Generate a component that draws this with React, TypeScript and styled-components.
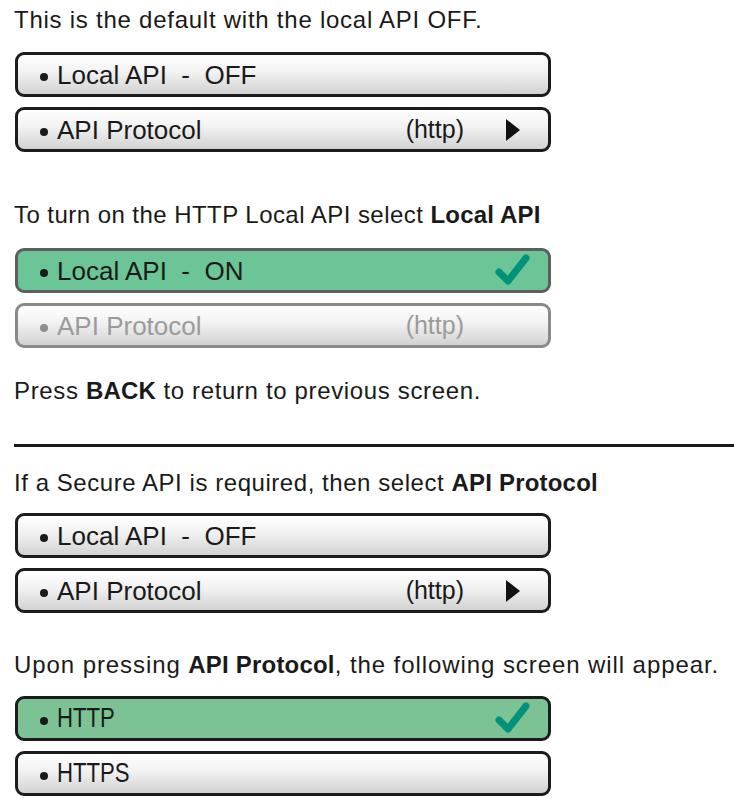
import React from "react";
import styled, { createGlobalStyle, css } from "styled-components";

const Global = createGlobalStyle`
  html, body { margin: 0; padding: 0; background: #ffffff; }
  body { font-family: "Liberation Sans", Arial, sans-serif; color: #1a1a1a; }
`;

const Page = styled.div`
  width: 734px;
  height: 799px;
  overflow: hidden;
  padding: 7px 0 0 14px;
  box-sizing: border-box;
  display: flex;
  flex-direction: column;
`;

const Caption = styled.p<{ $mt?: number; $mb?: number; $ls?: number }>`
  margin: ${(p) => p.$mt ?? 0}px 0 ${(p) => p.$mb ?? 0}px 0;
  font-size: 24px;
  line-height: 26px;
  letter-spacing: ${(p) => p.$ls ?? 0.6}px;
  color: #1a1a1a;
  white-space: nowrap;
  b { font-weight: 700; letter-spacing: 0.2px; }
`;

const Stack = styled.div`
  display: flex;
  flex-direction: column;
  gap: 10px;
  margin-left: 1px;
`;

type Variant = "normal" | "selected" | "selectedDark" | "disabled";

const Box = styled.div<{ $variant: Variant }>`
  box-sizing: border-box;
  width: 536px;
  height: 45px;
  border-radius: 9px;
  border: 3px solid #1c1c1c;
  display: flex;
  align-items: center;
  padding: 0 16px 0 22px;
  background: linear-gradient(180deg, #ffffff 0%, #f1f1f1 45%, #d2d2d2 100%);
  color: #1a1a1a;
  ${(p) =>
    p.$variant === "selected" &&
    css`
      background: #6cc597;
      border-color: #5e5e5e;
    `}
  ${(p) =>
    p.$variant === "selectedDark" &&
    css`
      background: #7cc294;
      border-color: #1c1c1c;
    `}
  ${(p) =>
    p.$variant === "disabled" &&
    css`
      border-color: #8a8a8a;
      color: #9b9b9b;
    `}
`;

const Bullet = styled.span<{ $dim?: boolean }>`
  width: 8px;
  height: 8px;
  border-radius: 50%;
  background: ${(p) => (p.$dim ? "#8e8e8e" : "#1a1a1a")};
  margin: 4px 9px 0 0;
  flex: none;
`;

const Label = styled.span<{ $narrow?: boolean }>`
  font-size: 26px;
  line-height: 1;
  white-space: pre;
  flex: 1;
  ${(p) =>
    p.$narrow &&
    css`
      font-size: 27px;
      display: inline-block;
      transform: scaleX(0.82);
      transform-origin: left center;
    `}
`;

const Value = styled.span`
  font-size: 25px;
  line-height: 1;
  margin-right: 42px;
`;

const Arrow = styled.span<{ $hidden?: boolean }>`
  width: 0;
  height: 0;
  border-top: 11px solid transparent;
  border-bottom: 11px solid transparent;
  border-left: 14px solid #111;
  margin-right: 12px;
  visibility: ${(p) => (p.$hidden ? "hidden" : "visible")};
`;

const Divider = styled.hr`
  border: none;
  height: 3px;
  background: #1a1a1a;
  margin: 40px 0 0 0;
  width: 720px;
`;

const CheckSvg = styled.svg`
  flex: none;
  margin-top: -2px;
`;

const Check = () => (
  <CheckSvg width="38" height="36" viewBox="0 0 38 36">
    <path
      d="M5 20 L14 29 L32 6"
      fill="none"
      stroke="#00927a"
      strokeWidth="7"
      strokeLinecap="round"
      strokeLinejoin="round"
    />
  </CheckSvg>
);

export default function App() {
  return (
    <>
      <Global />
      <Page>
        <Caption $mb={19} $ls={0.75}>This is the default with the local API OFF.</Caption>
        <Stack>
          <Box $variant="normal">
            <Bullet />
            <Label>{"Local API  -  OFF"}</Label>
          </Box>
          <Box $variant="normal">
            <Bullet />
            <Label>API Protocol</Label>
            <Value>(http)</Value>
            <Arrow />
          </Box>
        </Stack>

        <Caption $mt={50} $mb={20} $ls={0.45}>
          To turn on the HTTP Local API select <b>Local API</b>
        </Caption>
        <Stack>
          <Box $variant="selected">
            <Bullet />
            <Label>{"Local API  -  ON"}</Label>
            <Check />
          </Box>
          <Box $variant="disabled">
            <Bullet $dim />
            <Label>API Protocol</Label>
            <Value>(http)</Value>
            <Arrow $hidden />
          </Box>
        </Stack>

        <Caption $mt={30} $ls={0.65}>
          Press <b>BACK</b> to return to previous screen.
        </Caption>

        <Divider />

        <Caption $mt={23} $mb={17} $ls={0.55}>
          If a Secure API is required, then select <b>API Protocol</b>
        </Caption>
        <Stack>
          <Box $variant="normal">
            <Bullet />
            <Label>{"Local API  -  OFF"}</Label>
          </Box>
          <Box $variant="normal">
            <Bullet />
            <Label>API Protocol</Label>
            <Value>(http)</Value>
            <Arrow />
          </Box>
        </Stack>

        <Caption $mt={39} $mb={18} $ls={0.92}>
          Upon pressing <b>API Protocol</b>, the following screen will appear.
        </Caption>
        <Stack>
          <Box $variant="selectedDark">
            <Bullet />
            <Label $narrow>HTTP</Label>
            <Check />
          </Box>
          <Box $variant="normal">
            <Bullet />
            <Label $narrow>HTTPS</Label>
          </Box>
        </Stack>
      </Page>
    </>
  );
}
